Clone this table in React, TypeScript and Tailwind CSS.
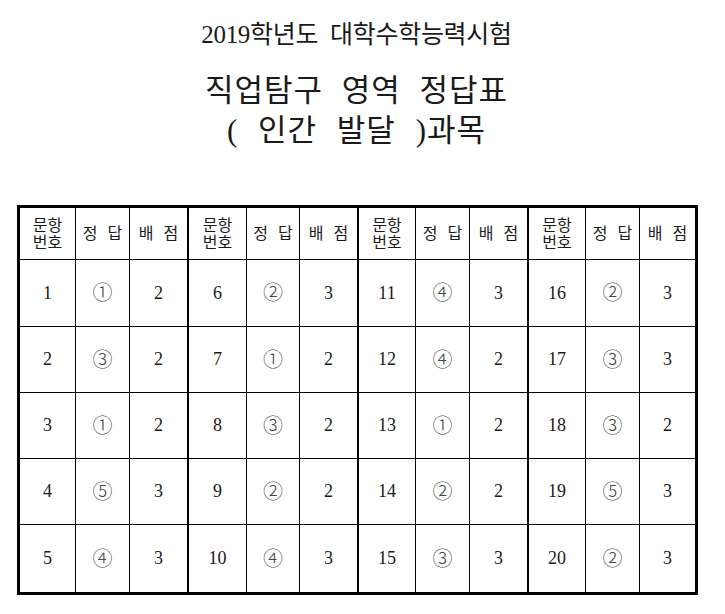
const groups = [
  [
    [1, "①", 2],
    [2, "③", 2],
    [3, "①", 2],
    [4, "⑤", 3],
    [5, "④", 3],
  ],
  [
    [6, "②", 3],
    [7, "①", 2],
    [8, "③", 2],
    [9, "②", 2],
    [10, "④", 3],
  ],
  [
    [11, "④", 3],
    [12, "④", 2],
    [13, "①", 2],
    [14, "②", 2],
    [15, "③", 3],
  ],
  [
    [16, "②", 3],
    [17, "③", 3],
    [18, "③", 2],
    [19, "⑤", 3],
    [20, "②", 3],
  ],
];

const serif = "font-['Liberation_Serif','Noto_Sans_CJK_KR',serif]";

export default function App() {
  const rows = [0, 1, 2, 3, 4];

  return (
    <main className={`min-h-screen w-[725px] bg-white pt-[20px] text-[#1a1a1a] ${serif}`}>
      <div className="pr-[12px] text-center">
        <h2 className="h-[30px] text-[25px] leading-[30px] tracking-[-0.3px] [word-spacing:6px]">2019학년도 대학수학능력시험</h2>
        <h1 className="mt-[21px] text-[31px] leading-[40px] tracking-[1px] [word-spacing:10px]">직업탐구 영역 정답표</h1>
        <h1 className="text-[31px] leading-[40px] tracking-[1px] [word-spacing:11px]">( 인간 발달 )과목</h1>
      </div>

      <div className="ml-[17px] mt-[54px] w-[681px] border-[3px] border-black">
        <div className="grid grid-cols-[56px_54px_59px_58px_53px_59px_57px_54px_59px_57px_54px_55px] grid-rows-[52px_67px_66px_66px_66px_67px]">
          {groups.map((_, g) => (
            <HeaderCells key={`h${g}`} last={g === 3} />
          ))}
          {rows.map((r) =>
            groups.map((grp, g) => (
              <DataCells key={`r${r}g${g}`} item={grp[r]} last={g === 3} bottom={r < 4} />
            ))
          )}
        </div>
      </div>
    </main>
  );
}

function HeaderCells({ last }: { last: boolean }) {
  return (
    <>
      <div className="flex flex-col items-center justify-center border-b border-r border-black text-[16px] leading-[17px]">
        <span>문항</span>
        <span>번호</span>
      </div>
      <div className="flex items-center justify-center border-b border-r border-black pl-[3px] text-[16px] tracking-[3px]">
        정 답
      </div>
      <div className={`flex items-center justify-center border-b border-black pl-[3px] text-[16px] tracking-[3px] ${last ? "" : "border-r-2"}`}>
        배 점
      </div>
    </>
  );
}

function DataCells({ item, last, bottom }: { item: (string | number)[]; last: boolean; bottom: boolean }) {
  const b = bottom ? "border-b" : "";
  return (
    <>
      <div className={`flex items-center justify-center border-r border-black text-[18px] ${b}`}>{item[0]}</div>
      <div className={`flex items-center justify-center border-r border-black text-[20px] font-light text-[#444] ${b}`}>{item[1]}</div>
      <div className={`flex items-center justify-center border-black text-[18px] ${b} ${last ? "" : "border-r-2"}`}>{item[2]}</div>
    </>
  );
}
